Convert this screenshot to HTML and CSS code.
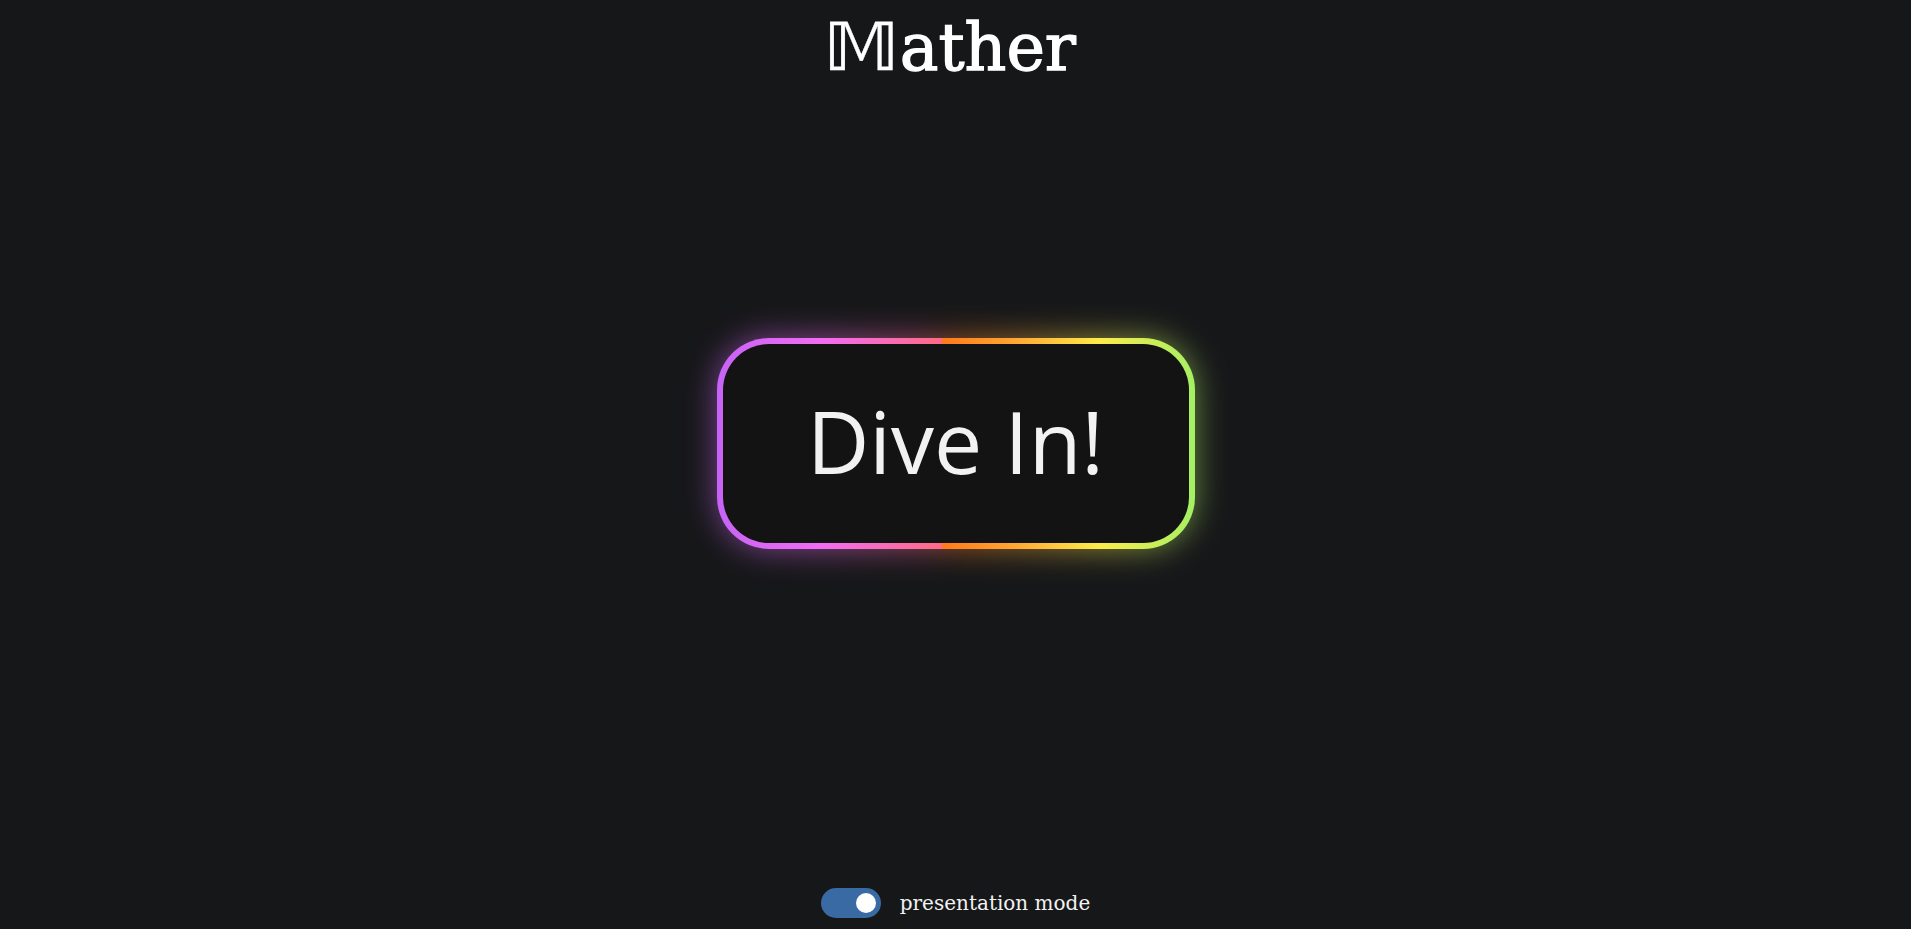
FILE: index.html
```html
<!DOCTYPE html>
<html lang="en">
<head>
<meta charset="utf-8">
<title>Mather</title>
<link rel="stylesheet" href="styles.css">
</head>
<body>
  <header class="top">
    <h1 class="logo"><span class="logo-m">𝕄</span><span class="logo-rest">ather</span></h1>
  </header>
  <main class="stage">
    <button class="dive" type="button"><span class="dive-label">Dive In!</span></button>
  </main>
  <footer class="bottom">
    <label class="switch">
      <span class="switch-track"><span class="switch-knob"></span></span>
      <span class="switch-text">presentation mode</span>
    </label>
  </footer>
</body>
</html>
```
FILE: styles.css
```css
html, body {
  margin: 0;
  padding: 0;
}
body {
  background: #161719;
  color: #f2f2f2;
  height: 100vh;
  display: flex;
  flex-direction: column;
  align-items: center;
  overflow: hidden;
  font-family: "DejaVu Serif", serif;
}
.top {
  padding-top: 8px;
}
.logo {
  margin: 0 0 0 -2px;
  font-weight: normal;
  font-size: 65px;
  line-height: 80px;
  color: #ffffff;
  font-family: "DejaVu Serif", "Liberation Serif", serif;
}
.logo-m {
  display: inline-block;
  font-family: "DejaVu Sans", "DejaVu Serif", serif;
  -webkit-text-stroke: 0.3px #ffffff;
  transform: scaleX(1.15);
  transform-origin: right center;
}
.logo-rest {
  -webkit-text-stroke: 1.3px #ffffff;
}
.stage {
  flex: 1;
  display: flex;
  justify-content: center;
  align-items: flex-start;
  padding-top: 250px;
}
.dive {
  position: relative;
  width: 478px;
  height: 211px;
  box-sizing: border-box;
  border: 6px solid transparent;
  border-radius: 52px;
  background:
    linear-gradient(#131313, #131313) padding-box,
    linear-gradient(90deg, #c664f6 0%, #f26cf2 22%, #ff6b84 47%, #ff7a1c 47.2%, #ffa534 62%, #fdeb4b 80%, #a4f064 100%) border-box;
  color: #f2f2f2;
  font-family: "Open Sans", "Noto Sans", sans-serif;
  font-size: 86px;
  padding: 0;
  cursor: pointer;
}
.dive::before {
  content: "";
  position: absolute;
  inset: -6px;
  border-radius: 52px;
  background: linear-gradient(90deg, #c664f6 0%, #f26cf2 22%, #ff6b84 47%, #ff7a1c 47.2%, #ffa534 62%, #fdeb4b 80%, #a4f064 100%);
  filter: blur(16px);
  opacity: 0.55;
  z-index: -1;
}
.dive-label {
  display: block;
  line-height: 1;
  margin-top: -6px;
}
.bottom {
  padding-bottom: 11px;
}
.switch {
  display: flex;
  align-items: center;
  gap: 19px;
  margin-left: 0;
}
.switch-track {
  width: 60px;
  height: 30px;
  border-radius: 15px;
  background: #3a6aa3;
  display: flex;
  align-items: center;
  justify-content: flex-end;
  padding: 0 5px;
  box-sizing: border-box;
}
.switch-knob {
  width: 20px;
  height: 20px;
  border-radius: 50%;
  background: #ffffff;
}
.switch-text {
  font-family: "DejaVu Serif", serif;
  font-size: 20px;
  color: #f2f2f2;
}
```
